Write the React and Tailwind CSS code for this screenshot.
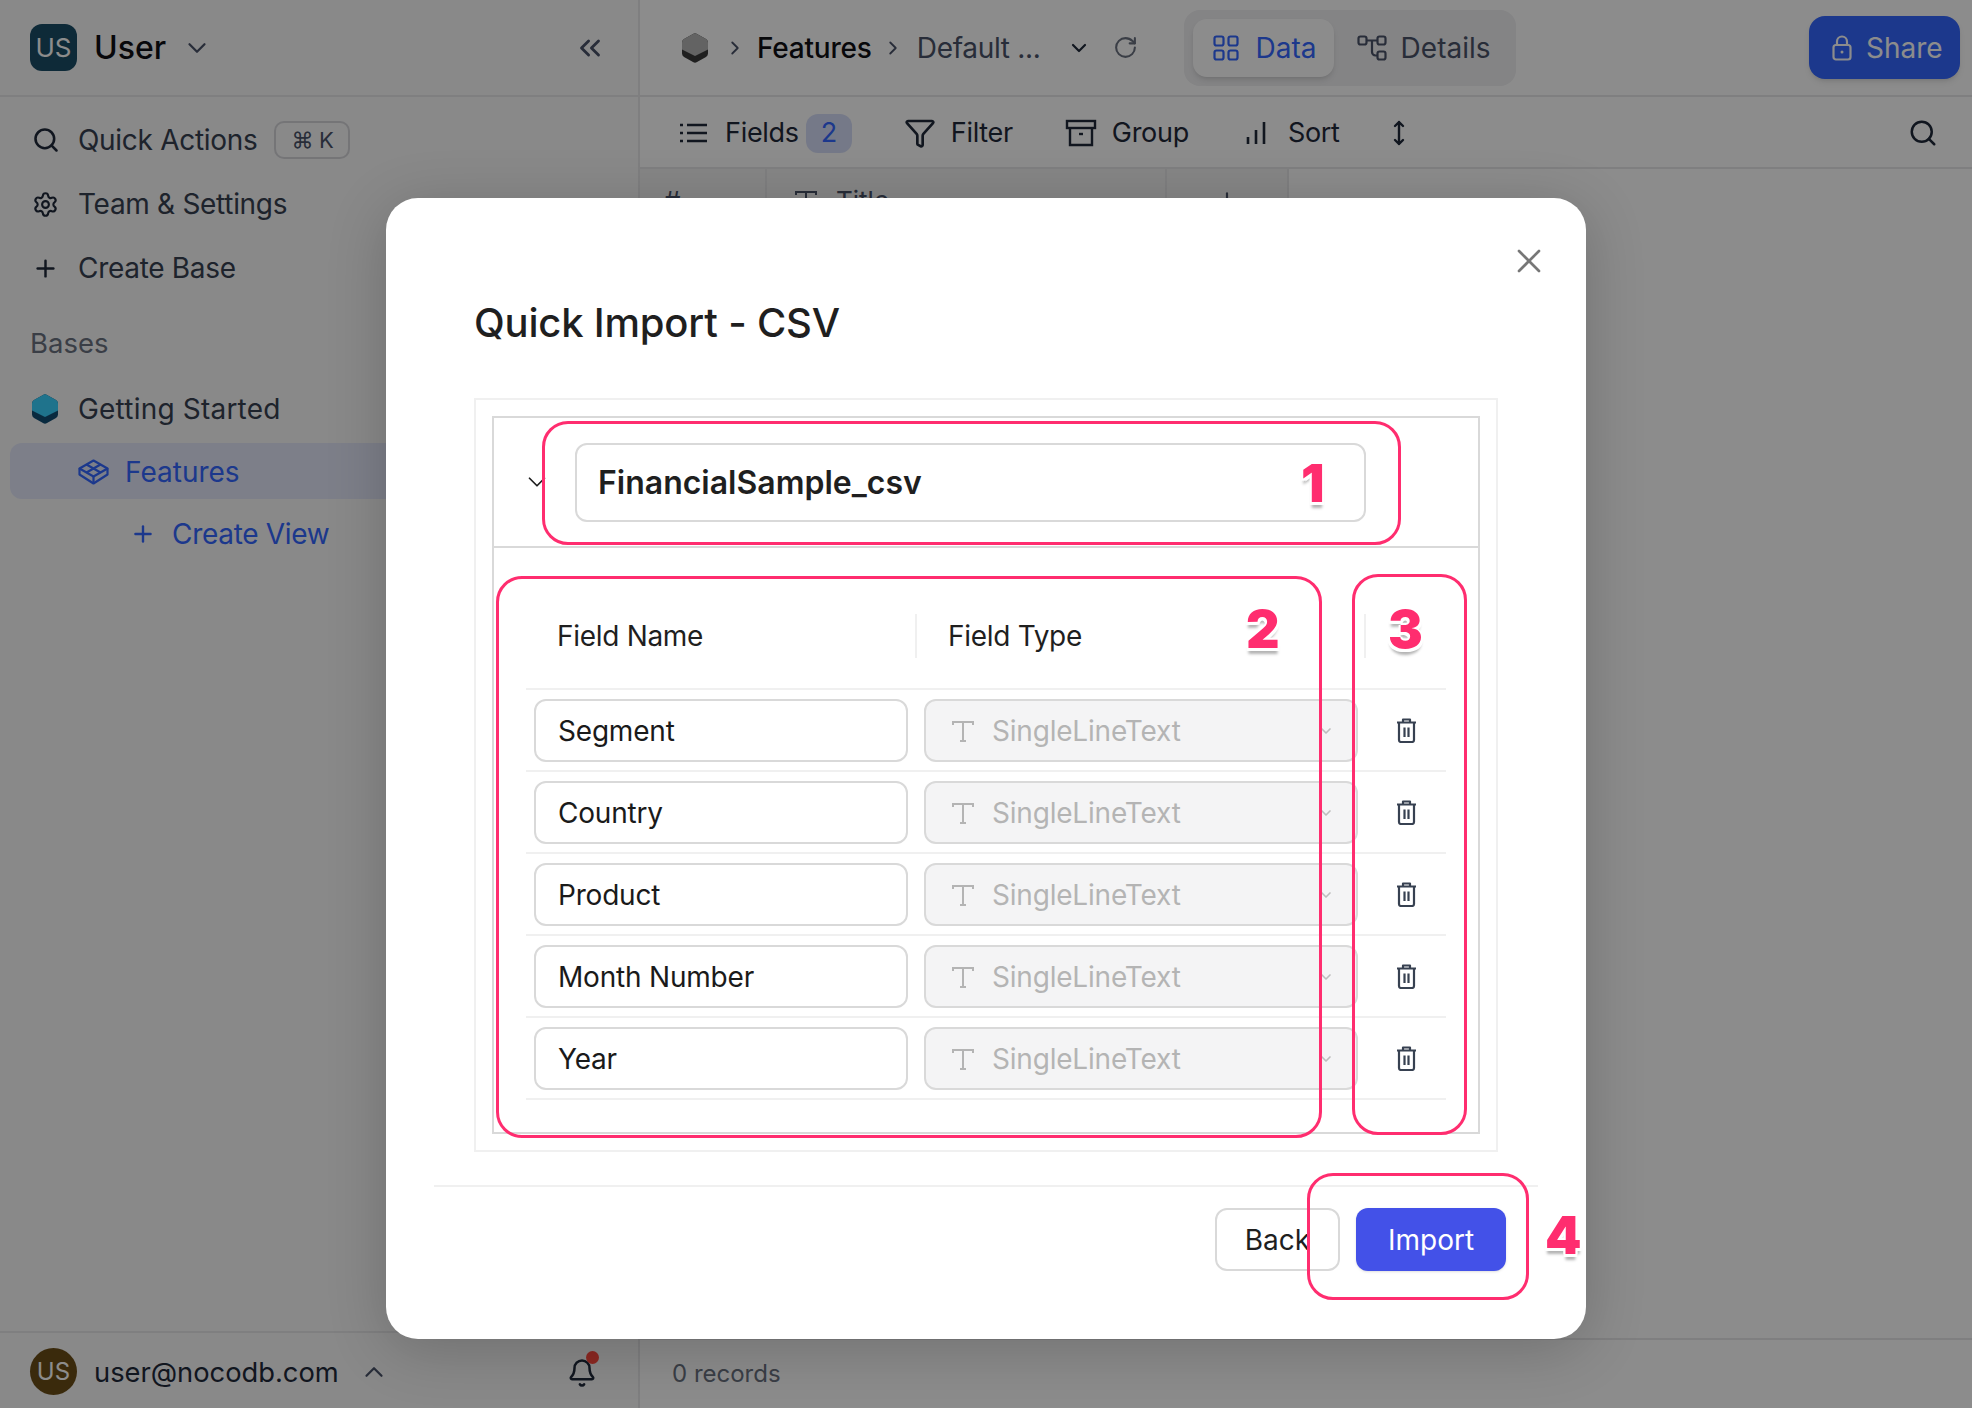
import React from "react";
import { ChevronDown, ChevronUp, ChevronsLeft, ChevronRight, Search, Settings, Plus, RotateCw, Funnel, Bell, X } from "lucide-react";

const fontStack = { fontFamily: "Inter, 'Noto Sans', sans-serif" };

function Hex({ top, bottom, className }) {
  return (
    <svg viewBox="0 0 26 30" className={className}>
      <path d="M11 .9a4 4 0 0 1 4 0l9 5.2a4 4 0 0 1 2 3.4v11a4 4 0 0 1-2 3.4l-9 5.2a4 4 0 0 1-4 0l-9-5.2a4 4 0 0 1-2-3.4v-11a4 4 0 0 1 2-3.4z" fill={bottom} />
      <path d="M11 .9a4 4 0 0 1 4 0l9 5.2a4 4 0 0 1 2 3.4v7l-13 6.5L0 16.500v-7a4 4 0 0 1 2-3.400z" fill={top} />
    </svg>
  );
}

function Cube() {
  return (
    <svg viewBox="0 0 31 26" className="h-[26px] w-[31px]" fill="none" stroke="#3366ff" strokeWidth="2.2" strokeLinejoin="round">
      <path d="M15.500 1.500 29.500 9.500 15.500 17.500 1.500 9.500z" />
      <path d="M1.500 9.500v6l14 9 14-9v-6" />
      <path d="M15.500 17.500v7" />
      <path d="M8.500 5.500 22.500 13.500M22.500 5.500 8.500 13.500" />
    </svg>
  );
}

function GridIcon() {
  return (
    <svg viewBox="0 0 26 26" className="h-[26px] w-[26px]" fill="none" stroke="#3366ff" strokeWidth="2.2">
      <rect x="1.500" y="1.500" width="9" height="9" rx="2" />
      <rect x="15.500" y="1.500" width="9" height="9" rx="2" />
      <rect x="1.500" y="15.500" width="9" height="9" rx="2" />
      <rect x="15.500" y="15.500" width="9" height="9" rx="2" />
    </svg>
  );
}

function DetailsIcon() {
  return (
    <svg viewBox="0 0 30 26" className="h-[26px] w-[30px]" fill="none" stroke="#4a5268" strokeWidth="2.2">
      <rect x="1.500" y="1.500" width="8" height="8" rx="2" />
      <rect x="20.500" y="1.500" width="8" height="8" rx="2" />
      <rect x="20.500" y="16.500" width="8" height="8" rx="2" />
      <path d="M9.500 5.500h11M15 5.500V17a3.500 3.500 0 0 0 3.500 3.500h2" />
    </svg>
  );
}

function GroupIcon() {
  return (
    <svg viewBox="0 0 32 28" className="h-[28px] w-[32px]" fill="none" stroke="#1f293a" strokeWidth="2.4">
      <rect x="2" y="2" width="28" height="7" />
      <path d="M5 9v17h22V9" />
      <path d="M14 15h4" />
    </svg>
  );
}

function SortIcon() {
  return (
    <svg viewBox="0 0 20 24" className="h-[24px] w-[20px]" fill="none" stroke="#1f293a" strokeWidth="2.6" strokeLinecap="butt">
      <path d="M2 23v-7M10 23V9M18 23V1" />
    </svg>
  );
}

function ListIcon() {
  return (
    <svg viewBox="0 0 28 22" className="h-[22px] w-[28px]" fill="none" stroke="#1f293a" strokeWidth="2.4">
      <path d="M8 3h20M8 11h20M8 19h20" />
      <path d="M1 3h3M1 11h3M1 19h3" />
    </svg>
  );
}

function UpDownIcon() {
  return (
    <svg viewBox="0 0 12 26" className="ml-[53px] h-[26px] w-[12px]" fill="none" stroke="#1f293a" strokeWidth="2.4" strokeLinecap="round" strokeLinejoin="round">
      <path d="M6 2v22M2 6l4-4 4 4M2 20l4 4 4-4" />
    </svg>
  );
}

function LockIcon() {
  return (
    <svg viewBox="0 0 20 26" className="h-[26px] w-[20px]" fill="none" stroke="#ffffff" strokeWidth="2.2">
      <rect x="1.500" y="10" width="17" height="14.500" rx="2.500" />
      <path d="M5 10V6.500a5 5 0 0 1 10 0V10" />
      <circle cx="10" cy="17" r="1.500" fill="#ffffff" stroke="none" />
    </svg>
  );
}

function TIcon({ color }) {
  return (
    <svg viewBox="0 0 24 22" className="h-[22px] w-[24px] shrink-0" fill="none" stroke={color} strokeWidth="2">
      <path d="M2 5V2h20v3M12 2v19M9 21h6" />
    </svg>
  );
}

function TrashIcon() {
  return (
    <svg viewBox="0 0 21 25" className="h-[25px] w-[21px]" fill="none" stroke="#374151" strokeWidth="2.2" strokeLinejoin="round">
      <path d="M1 4.500h19M7 4.500V1.500h7v3" />
      <path d="M3 4.500V22a2 2 0 0 0 2 2h11a2 2 0 0 0 2-2V4.500" />
      <path d="M8.500 9.500v9.500M12.500 9.500v9.500" />
    </svg>
  );
}

function SideRow({ icon, children, extra, track }) {
  return (
    <div className={`flex h-[64px] items-center pl-[32px] text-[28px] text-[#374151] ${track}`}>
      <span className="flex w-[46px] shrink-0 items-center">{icon}</span>
      <span>{children}</span>
      {extra}
    </div>
  );
}

function Sidebar() {
  return (
    <aside className="flex h-full w-[640px] shrink-0 flex-col border-r-2 border-[#e7e7e9] bg-[#f9f9fa]">
      <div className="flex h-[97px] shrink-0 items-center border-b-2 border-[#e7e7e9] pl-[30px] pr-[31px]">
        <div className="flex h-[47px] w-[47px] items-center justify-center rounded-[12px] bg-[#1a4d66] text-[26px] text-white">US</div>
        <span className="ml-[17px] text-[32px] font-medium text-[#101015]">User</span>
        <ChevronDown className="ml-[16px] text-[#4a5268]" size={30} strokeWidth={1.8} />
        <ChevronsLeft className="ml-auto text-[#4a5268]" size={34} strokeWidth={2} />
      </div>
      <div className="pt-[11px]">
        <SideRow
          track="tracking-[-0.3px]"
          icon={<Search size={28} strokeWidth={2.2} className="text-[#1f293a]" />}
          extra={
            <span className="ml-[17px] flex h-[38px] w-[76px] items-center justify-center rounded-[10px] border-2 border-[#d5d5d9] text-[22px] text-[#4a5268]">⌘ K</span>
          }
        >
          Quick Actions
        </SideRow>
        <SideRow track="tracking-[-0.3px]" icon={<Settings size={27} strokeWidth={1.9} className="text-[#1f293a]" />}>Team &amp; Settings</SideRow>
        <SideRow track="tracking-[-0.3px]" icon={<Plus size={27} strokeWidth={2.2} className="text-[#1f293a]" />}>Create Base</SideRow>
        <div className="mt-[12px] flex h-[64px] items-center pl-[30px] text-[27.500px] text-[#6b7280]">Bases</div>
        <div className="mt-[1px]">
          <SideRow track="tracking-[0.2px]" icon={<Hex top="#3ad1ff" bottom="#124e74" className="h-[30px] w-[26px]" />}>Getting Started</SideRow>
        </div>
        <div className="ml-[10px] mt-[2px] flex h-[56px] items-center rounded-l-[12px] bg-[#e3e8fa] pl-[68px] pt-[2px] text-[28px] text-[#3366ff]">
          <Cube />
          <span className="ml-[16px]">Features</span>
        </div>
        <div className="flex h-[62px] items-center pl-[130px] pt-[8px] text-[28px] tracking-[-0.3px] text-[#3366ff]">
          <Plus size={26} strokeWidth={2.2} />
          <span className="ml-[16px]">Create View</span>
        </div>
      </div>
      <div className="mt-auto flex h-[77px] shrink-0 items-center border-t-2 border-[#e7e7e9] pl-[30px] pr-[41px] pt-[2px]">
        <div className="flex h-[47px] w-[47px] items-center justify-center rounded-full bg-[#6b4d16] text-[24px] text-white">US</div>
        <span className="ml-[17px] pt-[3px] text-[27.300px] text-[#1f293a]">user@nocodb.com</span>
        <ChevronUp className="ml-[20px] text-[#4a5268]" size={30} strokeWidth={1.8} />
        <div className="relative ml-auto mt-[3px]">
          <Bell size={30} strokeWidth={2} className="text-[#1f293a]" />
          <span className="absolute right-[-2px] top-[-7px] h-[13px] w-[13px] rounded-full bg-[#ff4a3f]" />
        </div>
      </div>
    </aside>
  );
}

function TopBar() {
  return (
    <div className="flex h-[97px] shrink-0 items-center border-b-2 border-[#e7e7e9] pl-[42px] pr-[12px]">
      <Hex top="#b4b4b4" bottom="#3a3a3a" className="h-[30px] w-[26px]" />
      <ChevronRight className="ml-[16px] text-[#4a5268]" size={22} strokeWidth={2} />
      <span className="ml-[11px] text-[28px] font-medium tracking-[-0.2px] text-[#101015]">Features</span>
      <ChevronRight className="ml-[10px] text-[#4a5268]" size={22} strokeWidth={2} />
      <span className="ml-[13px] text-[28px] tracking-[-0.3px] text-[#4a5268]">Default ...</span>
      <ChevronDown className="ml-[26px] text-[#1f293a]" size={24} strokeWidth={2.2} />
      <RotateCw className="ml-[22px] text-[#6b7280]" size={25} strokeWidth={2} />
      <div className="ml-[46px] flex h-[76px] w-[332px] items-center rounded-[16px] bg-[#f0f0f2] pl-[9px]">
        <div className="flex h-[58px] w-[141px] items-center rounded-[14px] bg-white pl-[20px] text-[#3366ff] shadow-md">
          <GridIcon />
          <span className="ml-[17px] text-[28px]">Data</span>
        </div>
        <div className="ml-[23px] flex items-center text-[#4a5268]">
          <DetailsIcon />
          <span className="ml-[14px] text-[28px]">Details</span>
        </div>
      </div>
      <div className="ml-auto flex h-[63px] w-[151px] items-center rounded-[16px] bg-[#3366ff] pl-[23px] text-white shadow-md">
        <LockIcon />
        <span className="ml-[14px] text-[28px]">Share</span>
      </div>
    </div>
  );
}

function ToolBar() {
  return (
    <div className="flex h-[72px] shrink-0 items-center border-b-2 border-[#e7e7e9] pl-[39px] pr-[34px] pt-[2px] text-[27px] tracking-[-0.3px] text-[#1f293a]">
      <ListIcon />
      <span className="ml-[18px]">Fields</span>
      <span className="ml-[7px] flex h-[39px] w-[46px] items-center justify-center rounded-[12px] bg-[#d6ddf7] text-[#3366ff]">2</span>
      <Funnel className="ml-[52px]" size={32} strokeWidth={2} />
      <span className="ml-[15px]">Filter</span>
      <span className="ml-[52px]"><GroupIcon /></span>
      <span className="ml-[15px]">Group</span>
      <span className="ml-[57px]"><SortIcon /></span>
      <span className="ml-[22px]">Sort</span>
      <UpDownIcon />
      <Search className="ml-auto" size={30} strokeWidth={2} />
    </div>
  );
}

function TableHead() {
  return (
    <div className="flex flex-1 items-start">
      <div className="flex h-[65px] items-center border-b-2 border-[#e7e7e9] bg-[#f4f4f5] text-[26px] text-[#4a5268]">
        <div className="flex h-full w-[127px] items-center border-r-2 border-[#e7e7e9] pl-[24px]">#</div>
        <div className="flex h-full w-[400px] items-center border-r-2 border-[#e7e7e9] pl-[27px]">
          <TIcon color="#4a5268" />
          <span className="ml-[18px]">Title</span>
        </div>
        <div className="flex h-full w-[122px] items-center justify-center border-r-2 border-[#e7e7e9]">
          <Plus size={26} />
        </div>
      </div>
    </div>
  );
}

function Main() {
  return (
    <main className="flex h-full flex-1 flex-col bg-white">
      <TopBar />
      <ToolBar />
      <TableHead />
      <div className="flex h-[70px] shrink-0 items-center border-t-2 border-[#e7e7e9] pl-[32px] text-[24px] text-[#6b7280]">0 records</div>
    </main>
  );
}

const rows = ["Segment", "Country", "Product", "Month Number", "Year"];

function FieldRow({ name }) {
  return (
    <div className="flex h-[82px] items-center border-b-2 border-[#f0f0f0]">
      <div className="ml-[8px] flex h-[63px] w-[374px] items-center rounded-[12px] border-2 border-[#d9d9d9] pl-[22px] pt-[2px] text-[28px] tracking-[-0.2px] text-[#1a1a1a]">{name}</div>
      <div className="ml-[16px] flex h-[63px] w-[434px] items-center rounded-[12px] border-2 border-[#d9d9d9] bg-[#f4f4f5] pl-[25px] pt-[2px] text-[28px] tracking-[-0.2px] text-[#b4b4b4]">
        <TIcon color="#b4b4b4" />
        <span className="ml-[17px]">SingleLineText</span>
        <ChevronDown className="ml-auto mr-[22px] text-[#bdbdbd]" size={16} strokeWidth={2.5} />
      </div>
      <span className="ml-[38px] flex"><TrashIcon /></span>
    </div>
  );
}

function Modal() {
  return (
    <div className="relative flex h-[1141px] w-[1200px] flex-col rounded-[32px] bg-white shadow-[0_10px_60px_rgba(0,0,0,0.2)]">
      <X className="absolute right-[37px] top-[43px] text-[#777777]" size={40} strokeWidth={1.6} />
      <h1 className="ml-[88px] mt-[100px] h-[50px] text-[40px] font-medium leading-[50px] tracking-[-0.2px] text-[#1f1f1f]">Quick Import - CSV</h1>
      <div className="ml-[88px] mt-[50px] h-[754px] w-[1024px] border-2 border-[#f0f0f0] pb-[16px] pl-[16px] pr-[16px] pt-[16px]">
        <div className="h-full border-2 border-[#d9d9d9]">
          <div className="flex h-[130px] items-center border-b-2 border-[#d9d9d9]">
            <ChevronDown className="ml-[28px] text-[#1f1f1f]" size={30} strokeWidth={1.4} />
            <div className="ml-[23px] flex h-[79px] w-[791px] items-center rounded-[12px] border-2 border-[#d9d9d9] pl-[21px] pt-[2px] text-[32px] font-semibold tracking-[0px] text-[#1f1f1f]">FinancialSample_csv</div>
          </div>
          <div className="ml-[32px] w-[920px]">
            <div className="flex h-[142px] items-center border-b-2 border-[#f0f0f0] pt-[35px] text-[28px] tracking-[-0.3px] text-[#1f1f1f]">
              <span className="ml-[31px] w-[358px]">Field Name</span>
              <span className="h-[44px] border-l-2 border-[#f0f0f0]" />
              <span className="ml-[31px] w-[416px]">Field Type</span>
              <span className="h-[44px] border-l-2 border-[#f0f0f0]" />
            </div>
            {rows.map((r) => (
              <FieldRow key={r} name={r} />
            ))}
          </div>
        </div>
      </div>
      <div className="mx-[48px] mt-[33px] flex justify-end border-t-2 border-[#f0f0f0] pr-[32px] pt-[21px]">
        <button className="h-[63px] w-[125px] rounded-[12px] border-2 border-[#d9d9d9] bg-white text-[28px] text-[#1f1f1f]">Back</button>
        <button className="ml-[16px] h-[63px] w-[150px] rounded-[12px] bg-[#4351e8] text-[28px] text-white shadow-sm">Import</button>
      </div>
    </div>
  );
}

const numCls =
  "absolute text-[52px] font-black leading-none text-[#ff2d6f] [text-shadow:0_3px_0_#fff,2px_0_0_#fff,-2px_0_0_#fff,0_-2px_0_#fff,2px_3px_0_#fff,-2px_3px_0_#fff,0_6px_3px_rgba(0,0,0,0.3)]";
const boxCls = "absolute rounded-[26px] border-[3px] border-[#ff2d6f]";

export default function App() {
  return (
    <div className="relative flex h-[1408px] w-[1972px] overflow-hidden bg-white" style={fontStack}>
      <Sidebar />
      <Main />
      <div className="absolute inset-0 flex justify-center bg-[rgba(0,0,0,0.45)] pt-[198px]">
        <Modal />
      </div>
      <div className={`${boxCls} left-[542px] top-[421px] h-[124px] w-[859px]`} />
      <div className={`${boxCls} left-[496px] top-[576px] h-[562px] w-[826px]`} />
      <div className={`${boxCls} left-[1352px] top-[574px] h-[561px] w-[115px]`} />
      <div className={`${boxCls} left-[1307px] top-[1173px] h-[127px] w-[222px]`} />
      <span className={`${numCls} left-[1301px] top-[458px]`}>1</span>
      <span className={`${numCls} left-[1246px] top-[604px]`}>2</span>
      <span className={`${numCls} left-[1388px] top-[604px]`}>3</span>
      <span className={`${numCls} left-[1545px] top-[1210px]`}>4</span>
    </div>
  );
}
